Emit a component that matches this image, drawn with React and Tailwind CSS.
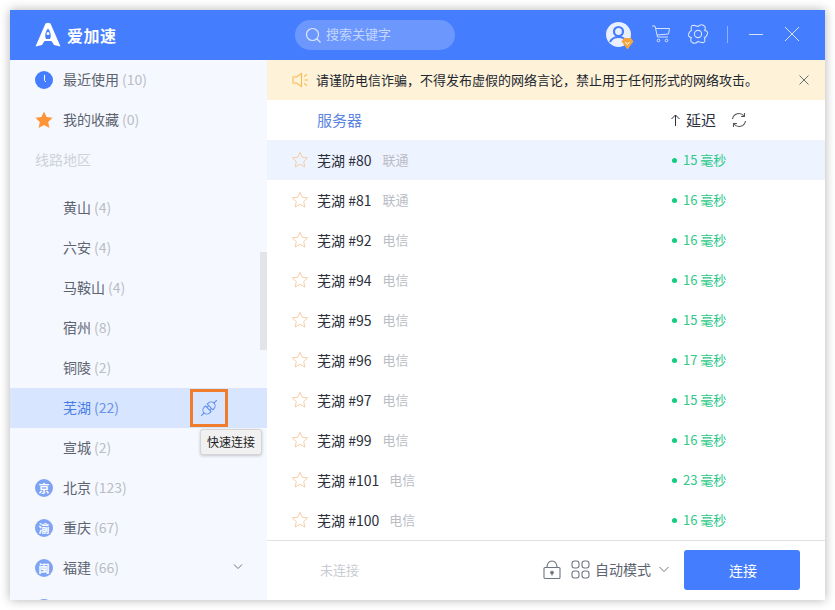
import React from "react";

const CJK = { fontFamily: '"Noto Sans CJK SC", "Noto Sans", sans-serif' };

const Star = ({ cls }) => (
  <svg width="18" height="18" viewBox="0 0 18 18" className={cls} fill="none" stroke="currentColor" strokeWidth="1" strokeLinejoin="round">
    <path d="M9 1.300l2.300 5 5.400.6-4 3.700 1.100 5.400L9 13.300 4.200 16l1.100-5.400-4-3.700 5.400-.6z" />
  </svg>
);

const Sub = ({ name, n, active }) => (
  <div className={`h-10 shrink-0 flex items-center pl-[53px] relative ${active ? "bg-[#d7e5fe]" : ""}`}>
    <span className={`text-[14px] mb-[2px] ${active ? "text-[#4a7de8]" : "text-[#5d6470]"}`}>{name}</span>
    <span className={`text-[14px] mb-[2px] ml-[3px] ${active ? "text-[#6c93e8]" : "text-[#b9bdc5]"}`}>({n})</span>
    {active && (
      <div className="absolute left-[180px] top-[1px] w-[38px] h-[38px] border-[3px] border-[#f07c2e] flex items-center justify-center">
        <svg width="18" height="18" viewBox="0 0 18 18" fill="none" stroke="#5b8bee" strokeWidth="1" className="overflow-visible">
          <g transform="rotate(-45 9 9)">
            <path d="M8 5H6a4 4 0 0 0 0 8h2z" />
            <path d="M10.500 5h1.500a4 4 0 0 1 0 8h-1.500z" />
            <path d="M-2 9h4M16 9h4M8 7h2.500M8 11h2.500" />
          </g>
        </svg>
      </div>
    )}
  </div>
);

const Province = ({ ch, name, n, chevron }) => (
  <div className="h-10 shrink-0 flex items-center pl-[25px] relative">
    <span className="w-[18px] h-[18px] rounded-full bg-[#7ea3f5] text-white text-[11px] leading-none flex items-center justify-center mr-[10px] font-bold">{ch}</span>
    {name && <span className="text-[14px] mb-[2px] text-[#5d6470]">{name}</span>}
    {name && <span className="text-[14px] mb-[2px] ml-[3px] text-[#b9bdc5]">({n})</span>}
    {chevron && (
      <svg className="absolute left-[222px] top-[14px]" width="12" height="10" viewBox="0 0 12 10" fill="none" stroke="#6b7280" strokeWidth="1">
        <path d="M2 2.500l4 4 4-4" />
      </svg>
    )}
  </div>
);

const Server = ({ num, isp, ms, active }) => (
  <div className={`h-10 shrink-0 flex items-center relative ${active ? "bg-[#edf3ff]" : ""}`}>
    <Star cls="ml-6 text-[#f3cfa6]" />
    <span className="ml-2 text-[14px] text-[#2a2f3a] whitespace-nowrap">芜湖 #{num}</span>
    <span className={`text-[13px] text-[#b9bdc5] ${num.length > 2 ? "ml-[10px]" : "ml-[11px]"}`}>{isp}</span>
    <div className="absolute left-[405px] flex items-center text-[13px] text-[#2ec98a]">
      <span className="w-[5px] h-[5px] rounded-full bg-[#14cc80] mr-[6px]" />
      <span>{ms} 毫秒</span>
    </div>
  </div>
);

const servers = [
  ["80", "联通", 15, true],
  ["81", "联通", 16],
  ["92", "电信", 16],
  ["94", "电信", 16],
  ["95", "电信", 15],
  ["96", "电信", 17],
  ["97", "电信", 15],
  ["99", "电信", 16],
  ["101", "电信", 23],
  ["100", "电信", 16],
];

export default function App() {
  return (
    <div className="w-[835px] h-[610px] bg-white p-[10px] overflow-hidden" style={CJK}>
      <div className="w-[815px] h-[590px] flex flex-col bg-white shadow-[0_0_10px_rgba(0,0,0,0.3)]">
        {/* Header */}
        <div className="h-[50px] shrink-0 bg-[#447dfe] flex items-center relative">
          <svg className="ml-[25px]" width="26" height="26" viewBox="0 0 26 26" fill="white">
            <path fillRule="evenodd" d="M10.500 1.500c1.500-1 3.500-1 5 0L25.500 24.500 19 23l-2.500-4h-7L7 23l-6.500 1.500zM13 6.500c-2 2-2.800 5-2.800 8l.8 2.500h4l.8-2.500c0-3-.8-6-2.800-8z" />
            <circle cx="13" cy="11.500" r="1.500" />
          </svg>
          <span className="ml-[6px] text-white text-[16px] font-bold tracking-[0.5px] whitespace-nowrap">爱加速</span>
          <div className="absolute left-[285px] top-[10px] w-[160px] h-[30px] rounded-full bg-[#6c98fe] flex items-center pl-[10px]">
            <svg width="17" height="17" viewBox="0 0 17 17" fill="none" stroke="#dbe6ff" strokeWidth="1.200">
              <circle cx="7.500" cy="7.500" r="6" />
              <path d="M12 12l3.500 3.500" />
            </svg>
            <span className="ml-[4px] text-[13px] mb-[2px] text-[#c4d6fe]">搜索关键字</span>
          </div>
          <div className="absolute left-[596px] top-[12px] w-[25px] h-[25px] rounded-full bg-[#e8f0ff] overflow-hidden">
            <svg width="25" height="25" viewBox="0 0 25 25" fill="none">
              <circle cx="12.500" cy="9.500" r="4.500" stroke="#447dfe" strokeWidth="2.200" />
              <path d="M4 20c2-4 5-5 8.500-5s6.500 1 8.500 5" stroke="#447dfe" strokeWidth="2" />
            </svg>
          </div>
          <svg className="absolute left-[611px] top-[27px]" width="13" height="13" viewBox="0 0 13 13">
            <path d="M3 1h7l2.500 3.500L6.500 12.500.5 4.500z" fill="#f5a63d" />
            <path d="M4.500 5l2 2.500L8.500 5" stroke="#fff" strokeWidth="1" fill="none" />
          </svg>
          <svg className="absolute left-[641px] top-[14px]" width="20" height="20" viewBox="0 0 20 20" fill="none" stroke="#d5e2ff" strokeWidth="1">
            <path d="M1 2h3l2.500 11H17M5 4.500h13.500l-1 5.500L6 11" />
            <circle cx="7.500" cy="16.500" r="1.300" />
            <circle cx="15.500" cy="16.500" r="1.300" />
          </svg>
          <svg className="absolute left-[678px] top-[14px]" width="20" height="20" viewBox="0 0 20 20" fill="none" stroke="#d5e2ff" strokeWidth="1.100">
            <path d="M10 2.500Q13 -.5 15.750 1.500T16.500 6.250Q20.500 7.500 19.500 10T16.500 13.750Q17.500 18 15.750 18.500T10 17.500Q7 20.500 4.250 18.500T3.500 13.750Q-.5 12.500 .5 10T3.500 6.250Q2.500 2 4.250 1.500T10 2.500z" />
            <circle cx="10" cy="10" r="3.600" />
          </svg>
          <div className="absolute left-[717px] top-[16px] w-px h-[17px] bg-[#8fb0fe]" />
          <div className="absolute left-[739px] top-[24px] w-[14px] h-px bg-[#d5e2ff]" />
          <svg className="absolute left-[774px] top-[16px]" width="16" height="16" viewBox="0 0 16 16" fill="none" stroke="#d5e2ff" strokeWidth="1">
            <path d="M1 1l14 14M15 1L1 15" />
          </svg>
        </div>

        <div className="flex-1 flex min-h-0">
          {/* Sidebar */}
          <div className="w-[257px] shrink-0 bg-[#f5f8ff] relative overflow-hidden flex flex-col">
            <div className="h-10 shrink-0 flex items-center pl-[25px]">
              <svg width="18" height="18" viewBox="0 0 18 18" className="mr-[10px]">
                <circle cx="9" cy="9" r="9" fill="#447dfe" />
                <path d="M9.500 4v5.500l1.500 1.500" stroke="#fff" strokeWidth="1" fill="none" />
              </svg>
              <span className="text-[14px] mb-[2px] text-[#5d6470]">最近使用</span>
              <span className="text-[14px] mb-[2px] ml-[3px] text-[#b9bdc5]">(10)</span>
            </div>
            <div className="h-10 shrink-0 flex items-center pl-[25px]">
              <svg width="18" height="18" viewBox="0 0 18 18" className="mr-[10px]">
                <path d="M9 .5l2.600 5.500 6 .8-4.400 4.100 1.200 6L9 14l-5.400 2.900 1.200-6L.4 6.800l6-.8z" fill="#ff9436" />
              </svg>
              <span className="text-[14px] mb-[2px] text-[#5d6470]">我的收藏</span>
              <span className="text-[14px] mb-[2px] ml-[3px] text-[#b9bdc5]">(0)</span>
            </div>
            <div className="h-10 shrink-0 flex items-center pl-[25px] text-[14px] text-[#cfd2d8]">
              <span className="mb-[2px]">线路地区</span>
            </div>
            <div className="h-2 shrink-0" />
            <Sub name="黄山" n={4} />
            <Sub name="六安" n={4} />
            <Sub name="马鞍山" n={4} />
            <Sub name="宿州" n={8} />
            <Sub name="铜陵" n={2} />
            <Sub name="芜湖" n={22} active />
            <Sub name="宣城" n={2} />
            <Province ch="京" name="北京" n={123} />
            <Province ch="渝" name="重庆" n={67} />
            <Province ch="闽" name="福建" n={66} chevron />
            <Province ch="" name="" n="" />
            <div className="absolute right-0 top-[192px] w-[7px] h-[98px] bg-[#e2e4e9]" />
            <div className="absolute left-[190px] top-[369px] w-[62px] h-[26px] rounded-[3px] border border-[#d5d5d5] bg-[#f1f1f1] shadow-[0_1px_3px_rgba(0,0,0,0.2)] flex items-center justify-center text-[12px] text-[#222] whitespace-nowrap">快速连接</div>
          </div>

          {/* Right */}
          <div className="flex-1 flex flex-col min-w-0">
            <div className="h-10 shrink-0 bg-[#fef2d9] flex items-center relative">
              <svg className="ml-[25px]" width="17" height="16" viewBox="0 0 17 16" fill="none" stroke="#f6bd55" strokeWidth="1.100">
                <path d="M1 5h3.500L9.500 1.500v13L4.500 11H1z" />
                <path d="M12 4.500l3-2M12.500 8H16M12 11.500l3 2" />
              </svg>
              <span className="ml-[7px] text-[13px] text-[#22262e] whitespace-nowrap">请谨防电信诈骗，不得发布虚假的网络言论，禁止用于任何形式的网络攻击。</span>
              <svg className="absolute left-[532px] top-[15px]" width="10" height="10" viewBox="0 0 10 10" fill="none" stroke="#666c78" strokeWidth="1">
                <path d="M.5.500l9 9M9.500.500l-9 9" />
              </svg>
            </div>
            <div className="h-10 shrink-0 flex items-center relative">
              <span className="ml-[50px] text-[15px] text-[#5a85e0]">服务器</span>
              <div className="absolute left-[403px] flex items-center text-[15px] text-[#2a2f3a]">
                <svg width="11" height="12" viewBox="0 0 11 12" fill="none" stroke="#2a2f3a" strokeWidth="1">
                  <path d="M5.500 12V1M1.500 5l4-4 4 4" />
                </svg>
                <span className="ml-[5px]">延迟</span>
              </div>
              <svg className="absolute left-[464px] top-[12px]" width="16" height="16" viewBox="0 0 16 16" fill="none" stroke="#555" strokeWidth="1.100">
                <path d="M1.500 7a6.500 6.500 0 0 1 11.500-3M14.500 9a6.500 6.500 0 0 1-11.500 3" />
                <path d="M13.500 1v3.500H10M2.500 15v-3.500H6" />
              </svg>
            </div>
            <div className="flex-1 flex flex-col min-h-0 overflow-hidden">
              {servers.map(([num, isp, ms, active]) => (
                <Server key={num} num={num} isp={isp} ms={ms} active={active} />
              ))}
            </div>
            <div className="h-[60px] shrink-0 border-t border-[#e1e1e1] flex items-center relative">
              <span className="ml-[53px] mb-[2px] text-[13px] text-[#c9ccd2]">未连接</span>
              <svg className="absolute left-[276px] top-[19px]" width="18" height="20" viewBox="0 0 18 20" fill="none" stroke="#6f7580" strokeWidth="1.100">
                <rect x="1" y="7.500" width="16" height="11" rx="1" />
                <path d="M4 7.500C4 3.500 6 1 9 1s5 2.500 5 6.500" />
                <circle cx="9" cy="12.500" r="1.300" fill="#6f7580" />
                <path d="M9 13v2.500" />
              </svg>
              <svg className="absolute left-[304px] top-[19px]" width="19" height="19" viewBox="0 0 19 19" fill="none" stroke="#6f7580" strokeWidth="1.100">
                <rect x="1" y="1" width="7" height="7" rx="2.500" />
                <rect x="11" y="1" width="7" height="7" rx="2.500" />
                <rect x="1" y="11" width="7" height="7" rx="2.500" />
                <rect x="11" y="11" width="7" height="7" rx="2.500" />
              </svg>
              <span className="absolute left-[328px] top-[19px] text-[14px] leading-[18px] text-[#5d6470] whitespace-nowrap">自动模式</span>
              <svg className="absolute left-[391px] top-[24px]" width="12" height="9" viewBox="0 0 12 9" fill="none" stroke="#6f7580" strokeWidth="1">
                <path d="M1.500 2l4.500 4.500L10.500 2" />
              </svg>
              <button className="absolute left-[417px] top-[9px] w-[116px] h-[40px] rounded-[3px] bg-[#447dfe] text-white text-[14px] pl-[2px]">连接</button>
            </div>
          </div>
        </div>
      </div>
    </div>
  );
}
